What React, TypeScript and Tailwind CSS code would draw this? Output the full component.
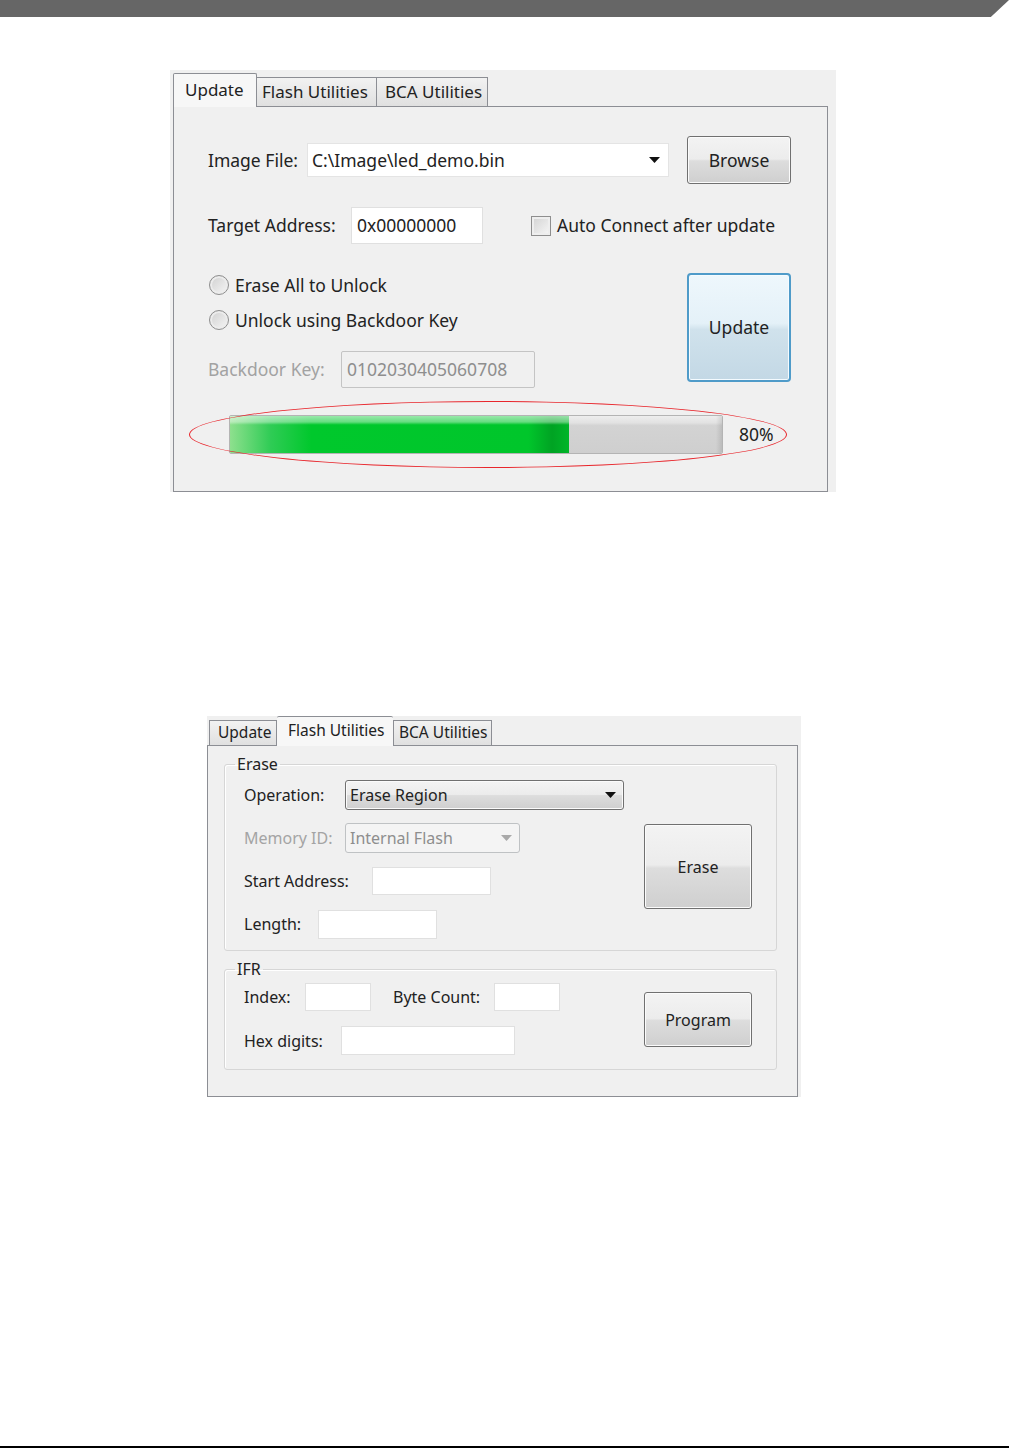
import React from 'react';

const winFace =
  'flex items-center rounded-[3px] border border-[#707070] bg-[linear-gradient(#f3f3f3_0%,#ececec_48%,#dddddd_52%,#cfcfcf_100%)] shadow-[inset_0_0_0_1px_#fbfbfb] text-[#222]';
const winButton = `${winFace} justify-center`;

function Arrow({ color = '#111' }: { color?: string }) {
  return (
    <svg width="11" height="6" viewBox="0 0 11 6">
      <polygon points="0,0 11,0 5.5,6" fill={color} />
    </svg>
  );
}

function Radio({ label }: { label: string }) {
  return (
    <div className="flex h-[24px] items-center">
      <span className="ml-[1px] h-[20px] w-[20px] rounded-full border border-[#8e8e8e] bg-[linear-gradient(135deg,#cfcfcf,#f6f6f6)] shadow-[inset_0_0_0_2px_#ececec]" />
      <span className="ml-[6px]">{label}</span>
    </div>
  );
}

function UpdatePanel() {
  return (
    <div className="ml-[170px] mt-[53px] flex h-[422px] w-[666px] flex-col bg-[#f0f0f0] pl-[3px] pt-[3px] text-[17.5px]">
      <div className="flex h-[34px] w-[655px] items-end text-[17px]">
        <div className="flex h-[34px] w-[84px] items-center rounded-t-[2px] border-x border-t border-[#8c8e94] bg-[#f7f7f7] pl-[11px] pb-[2px]">
          Update
        </div>
        <div className="flex h-[30px] w-[120px] items-center border-y border-r border-[#8c8e94] bg-[linear-gradient(#f2f2f2,#e0e0e0)] pl-[5px]">
          Flash Utilities
        </div>
        <div className="flex h-[30px] w-[111px] items-center border-y border-r border-[#8c8e94] bg-[linear-gradient(#f2f2f2,#e0e0e0)] pl-[8px]">
          BCA Utilities
        </div>
        <div className="h-[1px] flex-1 bg-[#8c8e94]" />
      </div>
      <div className="flex w-[655px] flex-1 flex-col border-x border-b border-[#8c8e94] pl-[34px] pr-[36px]">
        <div className="mt-[29px] flex h-[48px] items-center">
          <span className="w-[99px]">Image File:</span>
          <div className="flex h-[34px] w-[362px] items-center justify-between border border-[#e4e4e4] bg-white pl-[4px] pr-[8px]">
            <span>C:\Image\led_demo.bin</span>
            <Arrow />
          </div>
          <button className={`${winButton} ml-auto h-[48px] w-[104px]`}>Browse</button>
        </div>

        <div className="mt-[23px] flex h-[37px] items-center">
          <span className="w-[143px]">Target Address:</span>
          <div className="flex h-[37px] w-[132px] items-center border border-[#e0e0e0] bg-white pl-[5px]">
            0x00000000
          </div>
          <span className="ml-[48px] h-[20px] w-[20px] border border-[#8e8e8e] bg-[linear-gradient(135deg,#d2d2d2,#f7f7f7)] shadow-[inset_0_0_0_2px_#eeeeee]" />
          <span className="ml-[6px]">Auto Connect after update</span>
        </div>

        <div className="mt-[29px] flex h-[115px]">
          <div className="flex flex-col">
            <Radio label="Erase All to Unlock" />
            <div className="mt-[11px]">
              <Radio label="Unlock using Backdoor Key" />
            </div>
            <div className="mt-[19px] flex h-[37px] items-center text-[#a2a2a2]">
              <span className="w-[133px]">Backdoor Key:</span>
              <div className="flex h-[37px] w-[194px] items-center rounded-[2px] border border-[#c4c4c4] bg-[#f0f0f0] pl-[5px] text-[#8e8e8e]">
                0102030405060708
              </div>
            </div>
          </div>
          <button className="ml-auto flex h-[109px] w-[104px] items-center justify-center self-start rounded-[4px] border-2 border-[#4f9bc9] bg-[linear-gradient(#eef7fc_0%,#e4f1f8_46%,#d0e2ec_52%,#c3d8e5_100%)] shadow-[inset_0_0_0_1px_#f4fbff] text-[#222]">
            Update
          </button>
        </div>

        <div className="relative mt-[27px] flex h-[39px] items-center">
          <div className="ml-[21px] flex h-[39px] w-[494px] overflow-hidden rounded-[2px] border border-[#b4b4b4]">
            <div className="h-full w-[339px] [background:linear-gradient(to_bottom,rgba(255,255,255,0.6)_0%,rgba(255,255,255,0.4)_16%,rgba(255,255,255,0)_24%),linear-gradient(to_right,#8ee08e_0%,#2fcc55_12%,#00c82c_24%,#00c62b_88%,#00a323_95%,#00b629_100%)]" />
            <div className="h-full flex-1 [background:linear-gradient(to_right,rgba(0,0,0,0)_96%,rgba(0,0,0,0.1)_100%),linear-gradient(to_bottom,#eeeeee_0%,#e2e2e2_18%,#d3d3d3_26%,#cfcfcf_100%)]" />
          </div>
          <span className="ml-[16px]">80%</span>
          <div className="absolute left-[-19px] top-[-14px] h-[67px] w-[598px] rounded-[50%] border-[1.5px] border-[#e8262c]" />
        </div>
      </div>
    </div>
  );
}

function FlashPanel() {
  return (
    <div className="ml-[207px] mt-[224px] flex h-[381px] w-[594px] flex-col bg-[#f0f0f0] text-[16px]">
      <div className="flex h-[30px] w-[591px] items-end text-[15.5px]">
        <div className="h-[1px] w-[2px] bg-[#8c8e94]" />
        <div className="flex h-[26px] w-[68px] items-center border border-[#8c8e94] bg-[linear-gradient(#f2f2f2,#e0e0e0)] pl-[8px]">
          Update
        </div>
        <div className="flex h-[30px] w-[116px] items-center rounded-t-[2px] border-t border-[#8c8e94] bg-[#f7f7f7] pl-[11px] pb-[2px]">
          Flash Utilities
        </div>
        <div className="flex h-[26px] w-[99px] items-center border border-[#8c8e94] bg-[linear-gradient(#f2f2f2,#e0e0e0)] pl-[5px]">
          BCA Utilities
        </div>
        <div className="h-[1px] flex-1 bg-[#8c8e94]" />
      </div>
      <div className="flex w-[591px] flex-1 flex-col border-x border-b border-[#8c8e94] pl-[16px] pr-[20px]">
        <fieldset className="mt-[7px] rounded-[3px] border border-[#d6d6d6] shadow-[inset_1px_1px_0_#ffffff]">
          <legend className="ml-[10px] px-[2px] leading-[22px]">Erase</legend>
          <div className="flex pb-[11px] pl-[19px] pr-[24px] pt-[5px]">
            <div className="flex flex-col">
              <div className="flex h-[30px] items-center">
                <span className="w-[101px]">Operation:</span>
                <div className={`${winFace} h-[30px] w-[279px] justify-between pl-[4px] pr-[7px]`}>
                  <span>Erase Region</span>
                  <Arrow />
                </div>
              </div>
              <div className="mt-[13px] flex h-[30px] items-center">
                <span className="w-[101px] text-[#a4a4a4]">Memory ID:</span>
                <div className="flex h-[30px] w-[175px] items-center justify-between rounded-[3px] border border-[#bfc2c4] bg-[#f4f4f4] pl-[4px] pr-[7px] text-[#8e8e8e]">
                  <span>Internal Flash</span>
                  <Arrow color="#a9a9a9" />
                </div>
              </div>
              <div className="mt-[13px] flex h-[30px] items-center">
                <span className="w-[128px]">Start Address:</span>
                <div className="h-[28px] w-[119px] border border-[#e0e0e0] bg-white" />
              </div>
              <div className="mt-[13px] flex h-[30px] items-center">
                <span className="w-[74px]">Length:</span>
                <div className="h-[29px] w-[119px] border border-[#e0e0e0] bg-white" />
              </div>
            </div>
            <button className={`${winButton} ml-auto mt-[44px] h-[85px] w-[108px]`}>Erase</button>
          </div>
        </fieldset>

        <fieldset className="mt-[7px] rounded-[3px] border border-[#d6d6d6] shadow-[inset_1px_1px_0_#ffffff]">
          <legend className="ml-[10px] px-[2px] leading-[22px]">IFR</legend>
          <div className="flex pb-[14px] pl-[19px] pr-[24px] pt-[3px]">
            <div className="flex flex-col">
              <div className="flex h-[28px] items-center">
                <span className="w-[61px]">Index:</span>
                <div className="h-[28px] w-[66px] border border-[#e0e0e0] bg-white" />
                <span className="ml-[22px] w-[101px]">Byte Count:</span>
                <div className="h-[28px] w-[66px] border border-[#e0e0e0] bg-white" />
              </div>
              <div className="mt-[15px] flex h-[29px] items-center">
                <span className="w-[97px]">Hex digits:</span>
                <div className="h-[29px] w-[174px] border border-[#e0e0e0] bg-white" />
              </div>
            </div>
            <button className={`${winButton} ml-auto mt-[9px] h-[55px] w-[108px]`}>Program</button>
          </div>
        </fieldset>
      </div>
    </div>
  );
}

export default function App() {
  return (
    <div className="flex h-[1449px] w-[1009px] flex-col bg-white font-['Noto_Sans',sans-serif] text-[#222]">
      <div className="h-[17px] w-full bg-[#666666] [clip-path:polygon(0_0,100%_0,98.2%_100%,0_100%)]" />
      <UpdatePanel />
      <FlashPanel />
      <div className="mb-[1px] mt-auto h-[2px] w-full bg-black" />
    </div>
  );
}
